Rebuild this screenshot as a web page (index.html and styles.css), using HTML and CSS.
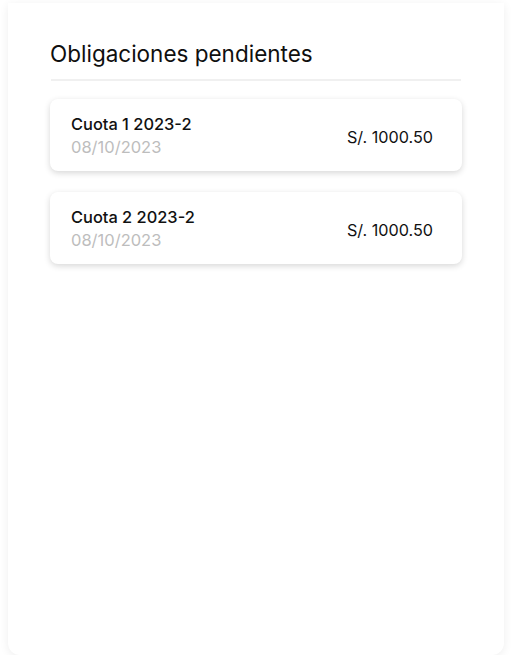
FILE: index.html
```html
<!DOCTYPE html>
<html lang="es">
<head>
<meta charset="utf-8">
<link rel="stylesheet" href="styles.css">
</head>
<body>
<div class="panel">
  <h2 class="title">Obligaciones pendientes</h2>
  <div class="divider"></div>
  <div class="list">
    <div class="item">
      <div class="info">
        <div class="name">Cuota 1 2023-2</div>
        <div class="date">08/10/2023</div>
      </div>
      <div class="amount">S/. 1000.50</div>
    </div>
    <div class="item">
      <div class="info">
        <div class="name">Cuota 2 2023-2</div>
        <div class="date">08/10/2023</div>
      </div>
      <div class="amount">S/. 1000.50</div>
    </div>
  </div>
</div>
</body>
</html>
```
FILE: styles.css
```css
html, body {
  margin: 0;
  background: #ffffff;
}
body {
  font-family: Inter, "Noto Sans", sans-serif;
  color: #111;
  padding: 3px 8px 0 8px;
}
.panel {
  height: 652px;
  box-sizing: border-box;
  background: #fff;
  border-radius: 0 0 12px 12px;
  box-shadow: 0 2px 10px rgba(0, 0, 0, 0.07);
  padding: 37px 42px 0 42px;
}
.title {
  margin: 0;
  font-size: 22.5px;
  font-weight: 400;
  line-height: 28px;
  color: #0f0f0f;
}
.divider {
  height: 2px;
  background: #f0f0f0;
  margin: 11px 1px 0 1px;
}
.list {
  display: flex;
  flex-direction: column;
  gap: 21px;
  margin-top: 18px;
}
.item {
  display: flex;
  align-items: center;
  justify-content: space-between;
  height: 72px;
  box-sizing: border-box;
  padding: 0 29px 0 21px;
  border-radius: 8px;
  background: #fff;
  box-shadow: 0 2px 6px rgba(0, 0, 0, 0.16);
}
.name {
  font-size: 16.4px;
  line-height: 20px;
  font-weight: 500;
  color: #111;
}
.date {
  font-size: 16.5px;
  line-height: 20px;
  color: #bdbdbd;
  margin-top: 3px;
}
.amount {
  font-size: 16.2px;
  line-height: 20px;
  color: #111;
  margin-top: 3px;
}
```
